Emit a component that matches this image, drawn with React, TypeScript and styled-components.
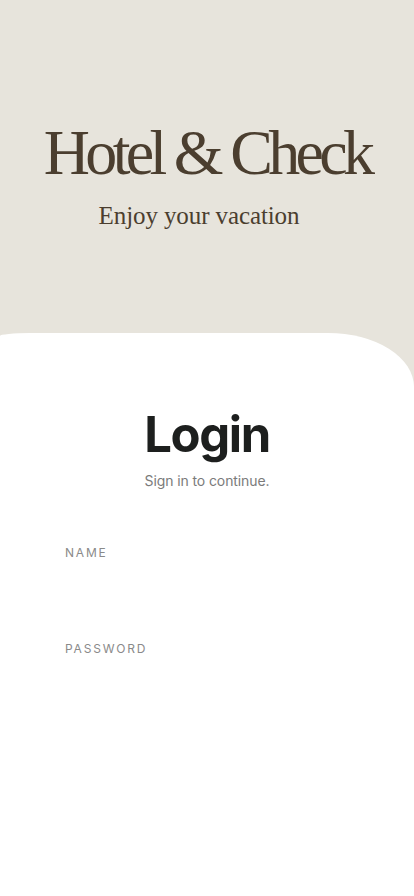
import React from "react";
import styled, { createGlobalStyle } from "styled-components";

const GlobalStyle = createGlobalStyle`
  html, body {
    margin: 0;
    padding: 0;
    background: #e7e4dc;
  }
  * {
    box-sizing: border-box;
  }
`;

const App = () => {
  return (
    <Wrapper>
      <GlobalStyle />
      <Hero>
        <Brand>Hotel &amp; Check</Brand>
        <Tagline>Enjoy your vacation</Tagline>
      </Hero>
      <Card>
        <Heading>Login</Heading>
        <Sub>Sign in to continue.</Sub>
        <Form>
          <Field>
            <Label htmlFor="name">Name</Label>
            <Input id="name" type="text" />
          </Field>
          <Field>
            <Label htmlFor="password">Password</Label>
            <Input id="password" type="password" />
          </Field>
        </Form>
      </Card>
    </Wrapper>
  );
};

const Wrapper = styled.div`
  display: flex;
  flex-direction: column;
  min-height: 896px;
  background: #e7e4dc;
`;

const Hero = styled.div`
  height: 333px;
  display: flex;
  flex-direction: column;
  align-items: center;
  padding-top: 118px;
`;

const Brand = styled.h1`
  margin: 0;
  font-family: "Liberation Serif", "Times New Roman", serif;
  font-weight: 400;
  font-size: 64px;
  line-height: 70px;
  letter-spacing: -4.7px;
  color: #4b3e2f;
`;

const Tagline = styled.p`
  margin: 13px 0 0;
  font-family: "Liberation Serif", "Times New Roman", serif;
  font-size: 25px;
  line-height: 30px;
  letter-spacing: -0.1px;
  color: #4b3e2f;
  transform: translateX(-8px);
`;

const Card = styled.div`
  flex-grow: 1;
  display: flex;
  flex-direction: column;
  align-items: center;
  background: #ffffff;
  border-top-left-radius: 30px 3px;
  border-top-right-radius: 86px 54px;
  padding-top: 74px;
`;

const Heading = styled.h2`
  margin: 0;
  font-family: Inter, "Liberation Sans", sans-serif;
  font-weight: 700;
  font-size: 49px;
  line-height: 56px;
  letter-spacing: -1.4px;
  color: #1d1f1e;
`;

const Sub = styled.p`
  margin: 9px 0 0;
  font-family: Inter, "Liberation Sans", sans-serif;
  font-size: 14px;
  line-height: 18px;
  letter-spacing: -0.1px;
  color: #7b7b7b;
`;

const Form = styled.form`
  align-self: stretch;
  display: flex;
  flex-direction: column;
  gap: 40px;
  padding: 55px 65px 0;
`;

const Field = styled.div`
  display: flex;
  flex-direction: column;
`;

const Label = styled.label`
  font-family: Inter, "Liberation Sans", sans-serif;
  font-size: 12px;
  line-height: 16px;
  letter-spacing: 1.8px;
  text-transform: uppercase;
  color: #8a8a8a;
`;

const Input = styled.input`
  height: 40px;
  border: none;
  outline: none;
  background: transparent;
  font-family: Inter, "Liberation Sans", sans-serif;
  font-size: 16px;
  color: #1d1f1e;
  padding: 0;
`;

export default App;
